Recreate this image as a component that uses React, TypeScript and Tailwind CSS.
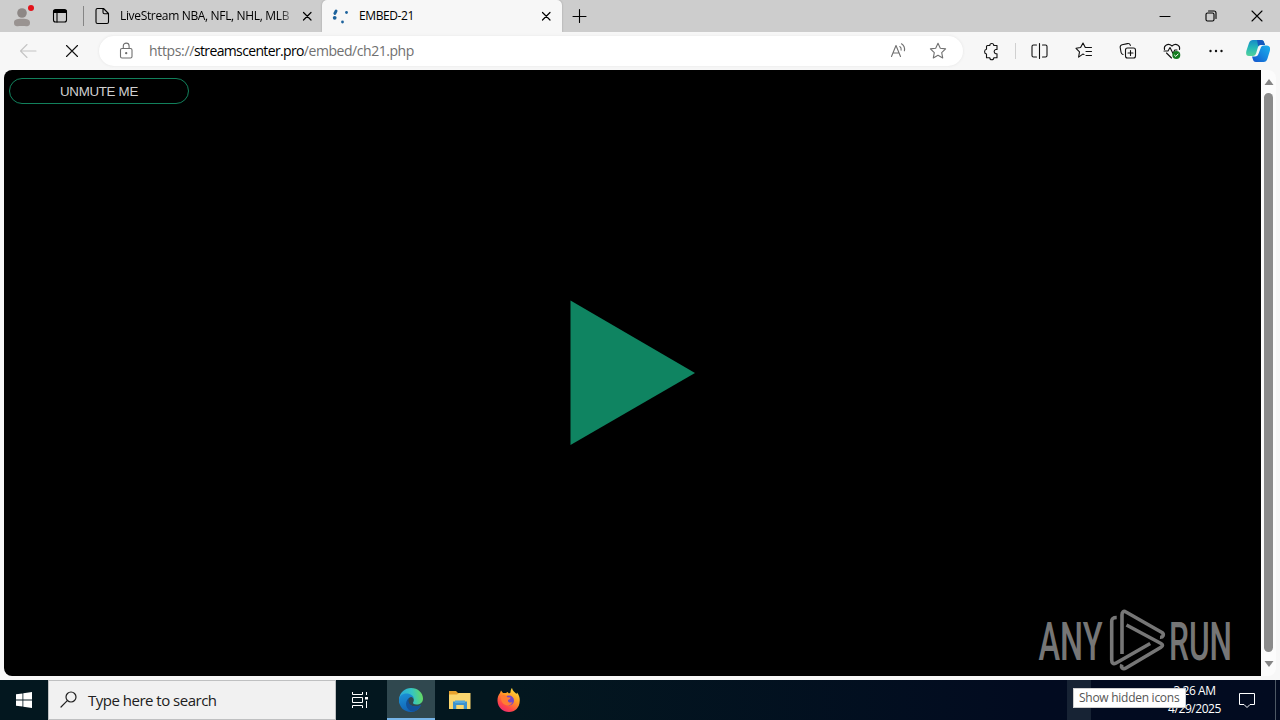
import type { ReactNode } from "react";

const UI_FONT = "font-['Open_Sans','Noto_Sans',sans-serif]";

type IconProps = {
  children: ReactNode;
  className?: string;
};

// 24px box, strokes are drawn in real pixels
function Icon({ children, className = "" }: IconProps) {
  return (
    <svg
      viewBox="0 0 24 24"
      fill="none"
      stroke="currentColor"
      strokeWidth="1.1"
      strokeLinecap="round"
      strokeLinejoin="round"
      className={`block h-6 w-6 shrink-0 ${className}`}
    >
      {children}
    </svg>
  );
}

function CloseIcon({ className = "" }: { className?: string }) {
  return (
    <Icon className={className}>
      <path d="M8.500 8.500l7.500 7.500M16 8.500L8.500 16" strokeWidth="1.2" />
    </Icon>
  );
}

function TabBar() {
  return (
    <div className="flex h-8 items-center bg-[#cdcdcd] text-black">
      <Icon className="ml-[10px]">
        <circle cx="12" cy="9" r="4.8" fill="#8d8785" stroke="none" />
        <path d="M4 18.500c0-2.600 2-3.800 8-3.800s8 1.200 8 3.800c0 5-3.500 3.500-8 3.500s-8 1.500-8-3.500z" fill="#999391" stroke="none" />
        <circle cx="21" cy="4" r="3" fill="#e3121a" stroke="none" />
      </Icon>
      <Icon className="ml-[14px]">
        <rect x="5.500" y="5.500" width="13" height="12.500" rx="2" />
        <path d="M5.500 7.500h13" strokeWidth="3" strokeLinecap="butt" />
        <path d="M9 9v9" />
      </Icon>
      <div className="ml-[11px] h-5 w-px bg-[#858585]" />
      <Icon className="ml-[6px]">
        <path d="M7.500 4.500h6l5 5V18a1.500 1.500 0 0 1-1.500 1.500H7.500A1.500 1.500 0 0 1 6 18V6a1.500 1.500 0 0 1 1.500-1.500zM13 4.500v3.700a1.500 1.500 0 0 0 1.500 1.500h4" />
      </Icon>
      <div className="ml-[6px] w-[173px] whitespace-nowrap bg-linear-to-r from-black from-90% to-[#aaa] bg-clip-text text-[12px] leading-4 tracking-[-0.340px] text-transparent">
        LiveStream NBA, NFL, NHL, MLB
      </div>
      <CloseIcon className="ml-[2px]" />
      <div className="ml-[3px] flex h-8 w-[240px] items-center rounded-t-[5px] bg-[#f7f7f7] shadow-[0_0_2px_#999]">
        <Icon className="ml-[7px]">
          <g fill="#1c629c" stroke="none">
            <circle cx="17.500" cy="8.500" r="1.400" />
            <circle cx="13.500" cy="18" r="1.400" />
            <circle cx="5.700" cy="13.800" r="1.900" />
          </g>
          <path d="M5.800 9.500l1.300-2.500" stroke="#1c629c" strokeWidth="2.800" />
        </Icon>
        <div className="ml-[6px] w-[175px] whitespace-nowrap text-[12px] leading-4 tracking-[-0.400px]">
          EMBED-21
        </div>
        <CloseIcon />
      </div>
      <Icon className="ml-[5px]">
        <path d="M12.500 5.500v13M6 12.500h13" />
      </Icon>
      <div className="ml-auto flex items-center">
        <Icon>
          <path d="M7 12.500h10" />
        </Icon>
        <Icon className="ml-[22px]">
          <rect x="7" y="9" width="8" height="8" rx="1.500" />
          <path d="M9.500 7h5.500a2 2 0 0 1 2 2v5.500" />
        </Icon>
        <Icon className="ml-[22px] mr-[11px]">
          <path d="M7 7l10 10M17 7L7 17" />
        </Icon>
      </div>
    </div>
  );
}

function AddressBar() {
  return (
    <div className="ml-[15px] flex h-[30px] w-[864px] items-center rounded-full bg-white text-[#707070] shadow-[0_0_3px_#e4e4e4]">
      <Icon className="ml-[15px]">
        <rect x="6.500" y="9.500" width="11.500" height="9.500" rx="1.500" />
        <path d="M9.300 9.500V7a2.900 2.900 0 0 1 5.800 0v2.500" />
        <circle cx="12.200" cy="14.200" r=".6" fill="currentColor" />
      </Icon>
      <div className="ml-[11px] whitespace-nowrap text-[14px] leading-5 tracking-[-0.450px]">
        <span className="tracking-[-0.350px]">https://</span>
        <span className="tracking-[-0.640px] text-black">streamscenter.pro</span>/embed/ch21.php
      </div>
      <Icon className="ml-auto">
        <path d="M5.500 17.500L10 6.500l4.500 11M7 14h6" />
        <path d="M13.800 7.500c1.300.8 1.600 2 1.300 3.700M15.500 4.800c2.300 1.500 3.500 3.900 2.900 7" />
      </Icon>
      <Icon className="ml-4 mr-[13px]">
        <path d="M12 4.300l2.300 4.900 5.300.7-3.900 3.700 1 5.300-4.700-2.600-4.700 2.600 1-5.300-3.900-3.700 5.300-.7z" />
      </Icon>
    </div>
  );
}

function CopilotIcon() {
  return (
    <svg viewBox="0 0 24 24" className="ml-[18px] block h-6 w-6 shrink-0">
      <defs>
        <linearGradient id="copilotLeft" x1="0" y1="0" x2="0" y2="1">
          <stop offset="0" stopColor="#168bc7" />
          <stop offset=".5" stopColor="#26b9b7" />
          <stop offset="1" stopColor="#54d29a" />
        </linearGradient>
        <linearGradient id="copilotRight" x1="1" y1="0" x2="0" y2="1">
          <stop offset="0" stopColor="#1bb2ee" />
          <stop offset=".5" stopColor="#1687df" />
          <stop offset="1" stopColor="#1552cc" />
        </linearGradient>
      </defs>
      <path d="M7 1h8c2 0 2.800 1 3.300 3l.7 2h-4c-2 0-2.800 1-3.300 3l-1.500 5c-.6 2-1.500 3-3.500 3H3C-.2 17-.2 14 .5 11.500L3 4c.7-2 2-3 4-3z" fill="url(#copilotLeft)" />
      <path d="M11 1h4c2 0 2.800 1 3.300 3l.7 2h-4c-1.300 0-2.200.4-2.800 1.500z" fill="#1559bd" />
      <path d="M18 6.500h2.500c3.700 0 4 2.700 3.300 5.500L21.500 19.500c-.7 2.500-2 3.500-4 3.500H10c-2 0-2.700-1-3.200-3l-.8-2.500h3c2 0 3-1 3.600-3l1.900-5c.5-2 1.500-3 3.500-3z" fill="url(#copilotRight)" />
    </svg>
  );
}

function Toolbar() {
  return (
    <div className="flex h-[38px] items-center bg-[#f7f7f7] text-[#111]">
      <Icon className="ml-4 text-[#c4c4c4]">
        <path d="M20 12H4.500M11 5.500L4.500 12l6.500 6.500" />
      </Icon>
      <Icon className="ml-5">
        <path d="M6.500 6.500l11 11M17.500 6.500l-11 11" />
      </Icon>
      <AddressBar />
      <Icon className="ml-4">
        <path d="M8.500 6.500h2.300a2 2 0 0 1 4 0h3.200v4h-1.300a2.200 2.200 0 0 0 0 4.200h1.300v4h-3.200a2 2 0 0 1-4 0H7.500v-3.700a2.400 2.400 0 0 1 0-4.700V7.500a1 1 0 0 1 1-1z" />
      </Icon>
      <div className="ml-3 h-4 w-px bg-[#d0d0d0]" />
      <Icon className="ml-[11px]">
        <path d="M9.500 6H6.500A1.500 1.500 0 0 0 5 7.500v9A1.500 1.500 0 0 0 6.500 18h3M15.500 6h3A1.500 1.500 0 0 1 20 7.500v9a1.500 1.500 0 0 1-1.500 1.500h-3M12.500 4.500v15" />
      </Icon>
      <Icon className="ml-[21px]">
        <path d="M12 15.500l-1.200-.4-4.200 3 .9-5.300-3.500-3.500 4.600-.8L11 4l2.300 4.500h6.200M14 12.500h5.500M14 16.500h5.500" />
      </Icon>
      <Icon className="ml-5">
        <rect x="9.500" y="9" width="10" height="10" rx="2" />
        <path d="M14.500 11.500v5M12 14h5M7 15.500c-1.200-.4-1.700-1-1.900-2L4.200 8.500C4 7 4.700 6 6.100 5.700l5.400-1.100c1.400-.2 2.500.4 2.900 1.800" />
      </Icon>
      <Icon className="ml-5">
        <path d="M4.500 10.500c-1-4 3.500-7 7.500-3.500 4-3.500 8.500-.5 7.500 3.500M6.500 14l5 5M4 12h4l2-3.500 3 6 1.800-3.500H17" />
        <circle cx="16.300" cy="16" r="4" fill="#137c20" stroke="none" />
        <path d="M14.500 16.200l1.300 1.200 2.300-2.400" stroke="white" strokeWidth="1" />
      </Icon>
      <Icon className="ml-5">
        <g fill="currentColor" stroke="none">
          <circle cx="6.500" cy="12" r="1.200" />
          <circle cx="12" cy="12" r="1.200" />
          <circle cx="17.500" cy="12" r="1.200" />
        </g>
      </Icon>
      <CopilotIcon />
    </div>
  );
}

function Watermark() {
  return (
    <svg
      viewBox="0 0 192 62"
      className="mb-[5px] mr-[30px] block h-[62px] w-[192px] overflow-visible"
      fill="#767676"
    >
      <g className="font-[Roboto,sans-serif] font-medium" fontSize="53">
        <text x="-.5" y="50.500" textLength="64" lengthAdjust="spacingAndGlyphs">
          ANY
        </text>
        <text x="130" y="50.500" textLength="63" lengthAdjust="spacingAndGlyphs">
          RUN
        </text>
      </g>
      <g
        fill="none"
        stroke="#767676"
        strokeWidth="3.600"
        strokeLinejoin="round"
      >
        <path d="M77.700 8.500c-3.500 0-5 1-5 4V51c0 3 1.500 4.500 4 3.200l34.500-19.700" />
        <path d="M83 45V6c0-3 1.500-4.500 4-3l36 20.500c2.500 2 1 5-2 4.800" />
        <path d="M87.500 16l34.500 18.500c2 1.200 2 2.500 0 3.700L87 59c-3 1.800-5.500-.5-4-3.500" />
      </g>
    </svg>
  );
}

function Player() {
  return (
    <div className="flex flex-1 flex-col bg-black">
      <button
        type="button"
        className="ml-[5px] mt-2 h-[26px] w-[180px] shrink-0 rounded-full border border-[#12805c] pt-px font-['Liberation_Sans',sans-serif] text-[13.333px] leading-[23px] tracking-[-0.300px] text-[#d0d0d0]"
      >
        UNMUTE ME
      </button>
      <div className="flex h-[145px] shrink-0 pl-[566px] mt-[196px]">
        <svg viewBox="0 0 125 145" className="h-[145px] w-[125px]">
          <path d="M.5.500L125 73 .5 145z" fill="#0f8461" />
        </svg>
      </div>
      <div className="mt-auto flex justify-end">
        <Watermark />
      </div>
    </div>
  );
}

function Scrollbar() {
  return (
    <div className="flex w-[15px] flex-col items-center bg-[#fcfcfc]">
      <svg viewBox="0 0 10 6" className="mt-[9px] h-[6px] w-[10px] shrink-0">
        <path d="M5 0l4.500 6h-9z" fill="#858585" />
      </svg>
      <div className="mt-2 h-[559px] w-[9px] shrink-0 rounded-full bg-[#8b8b8b]" />
      <svg viewBox="0 0 10 6" className="mt-[9px] h-[6px] w-[10px] shrink-0">
        <path d="M5 6L.5 0h9z" fill="#858585" />
      </svg>
    </div>
  );
}

function EdgeIcon() {
  return (
    <svg viewBox="0 0 24 24" className="h-6 w-6">
      <defs>
        <linearGradient id="edgeTop" x1="0" y1=".4" x2="1" y2=".3">
          <stop offset="0" stopColor="#28a7dc" />
          <stop offset=".55" stopColor="#35c5c2" />
          <stop offset="1" stopColor="#68db5b" />
        </linearGradient>
        <linearGradient id="edgeBody" x1="0" y1="0" x2=".3" y2="1">
          <stop offset="0" stopColor="#1b92d7" />
          <stop offset="1" stopColor="#1264b6" />
        </linearGradient>
      </defs>
      <path d="M0 11C1 4 6 0 12 0c7 0 12 5 12 10.500 0 4-3 6-6.500 6-3 0-4-1.200-3.300-2.300 1.800-2.700-.2-6.200-4.200-6.200-5 0-8 3.500-10 8z" fill="url(#edgeTop)" />
      <path d="M0 12c0-4 3.500-6.500 7.500-6.500 4 0 7.500 2.500 7.500 6 0-2-3-3.500-5-1.500-2.500 2.500-1 8 5.500 8.500 3 .2 5-.8 6.500-1.800C20.500 21 16.500 24 12 24 5 24 0 19 0 12z" fill="url(#edgeBody)" />
      <path d="M10 10c-5 3.500-3.500 12.500 4 13.800 3.500-.7 6.500-3 8-7.100-5 3-12.500 1.800-12.500-4.200 0-1 .2-1.800.5-2.500z" fill="#12519a" />
    </svg>
  );
}

function ExplorerIcon() {
  return (
    <svg viewBox="0 0 24 24" className="h-6 w-6">
      <path d="M1 3h7l2 2h12v4H1z" fill="#e8a22d" />
      <path d="M1 6.500h8L11 5h11.500v16H1z" fill="#fbd66e" />
      <path d="M5 21v-7.500h14V21h-3.500v-4h-7v4z" fill="#3e92cd" />
      <path d="M7 12.500h10V15H7z" fill="#55a9dd" />
      <path d="M8.500 17h7v4h-7z" fill="#fbd66e" />
    </svg>
  );
}

function FirefoxIcon() {
  return (
    <svg viewBox="0 0 24 24" className="h-6 w-6">
      <defs>
        <linearGradient id="foxFire" x1=".8" y1="0" x2=".2" y2="1">
          <stop offset="0" stopColor="#ffe23f" />
          <stop offset=".4" stopColor="#ff9a24" />
          <stop offset=".75" stopColor="#ff4648" />
          <stop offset="1" stopColor="#e72779" />
        </linearGradient>
      </defs>
      <path d="M3 5l1-2.500 2 2.500 3 0 1.500-1 1.500 1.500 1.500-1c0-2 .5-3.500 1.500-4.500.5 3 3 4 4.500 6l.5-1.500c2.300 3 3 5.500 2.700 8.500C22.700 19.500 18 24 12 24S.8 19.500.5 13C.4 10 1 7.500 3 5z" fill="url(#foxFire)" />
      <circle cx="12" cy="12.500" r="5" fill="#7148c9" />
      <path d="M4 8c3-2 5-1 6.500 1.200l3 .3c0 1.500-1.500 2-2.500 2.500-.5 2 1.500 3.500 4.500 2-1 3-4.500 4.500-8 2.500S4 11.500 4 8z" fill="#ff7c33" />
    </svg>
  );
}

function Taskbar() {
  return (
    <div className="flex h-10 items-stretch bg-linear-to-r from-[#03171f] from-40% to-[#020b20] to-80% text-white">
      <div className="flex w-12 items-center justify-center">
        <svg viewBox="0 0 16 16" className="h-4 w-4" fill="white">
          <path d="M0 2.300l6.500-.9v6.100H0zM7.300 1.300L16 0v7.500H7.300zM0 8.400h6.500v6.200L0 13.700zM7.300 8.400H16V16l-8.700-1.300z" />
        </svg>
      </div>
      <div className="flex w-72 items-center border border-[#bfc0c1] bg-[#f1f1f1] text-[#202020]">
        <Icon className="ml-[7px]">
          <circle cx="15" cy="9" r="5" strokeWidth="1.200" />
          <path d="M11.300 12.700L5 19" strokeWidth="1.200" />
        </Icon>
        <span className="ml-[8px] whitespace-nowrap text-[15px] leading-5 tracking-[-0.500px]">
          Type here to search
        </span>
      </div>
      <div className="mr-[3px] flex w-12 items-center justify-center">
        <svg viewBox="0 0 16 16" className="h-4 w-4" fill="none" stroke="white">
          <path d="M.5 0v2.500h10V0M.5 16v-2.500h10V16M.5 5.500h10v5H.5zM14.500 0v3M14.500 9v7" />
          <path d="M13 5h3v2.500h-3z" fill="white" stroke="none" />
        </svg>
      </div>
      <div className="flex w-12 items-center justify-center border-b-2 border-[#76b5e8] bg-[#30484f] pt-[2px]">
        <EdgeIcon />
      </div>
      <div className="ml-px flex w-12 items-center justify-center">
        <ExplorerIcon />
      </div>
      <div className="ml-px flex w-12 items-center justify-center">
        <FirefoxIcon />
      </div>
      <div className="relative ml-auto w-6 bg-[#172334]">
        <div className="absolute left-[6px] top-2 z-10 h-[20px] w-[113px] whitespace-nowrap border border-[#cfcfcf] bg-white pl-[5px] text-[12px] leading-[18px] tracking-[-0.270px] text-[#555]">
          Show hidden icons
        </div>
      </div>
      <div className="flex w-[144px] flex-col items-center pl-[63px] pt-[2px] text-[12px] leading-[18px] tracking-[-0.450px]">
        <span className="whitespace-nowrap">3:26 AM</span>
        <span className="whitespace-nowrap">4/29/2025</span>
      </div>
      <div className="flex w-6 items-center justify-center">
        <svg viewBox="0 0 16 16" className="h-4 w-4" fill="none" stroke="white">
          <path d="M.5 1.500h15v11H11L8 15.500l-3-3H.5z" />
        </svg>
      </div>
      <div className="ml-4 w-[5px] border-l border-[#4d5864]" />
    </div>
  );
}

export default function App() {
  return (
    <div className={`flex h-[720px] w-[1280px] flex-col overflow-hidden bg-[#f7f7f7] ${UI_FONT}`}>
      <TabBar />
      <Toolbar />
      <div className="mb-1 ml-1 mr-1 flex h-[606px] overflow-hidden rounded-[8px]">
        <Player />
        <Scrollbar />
      </div>
      <Taskbar />
    </div>
  );
}
